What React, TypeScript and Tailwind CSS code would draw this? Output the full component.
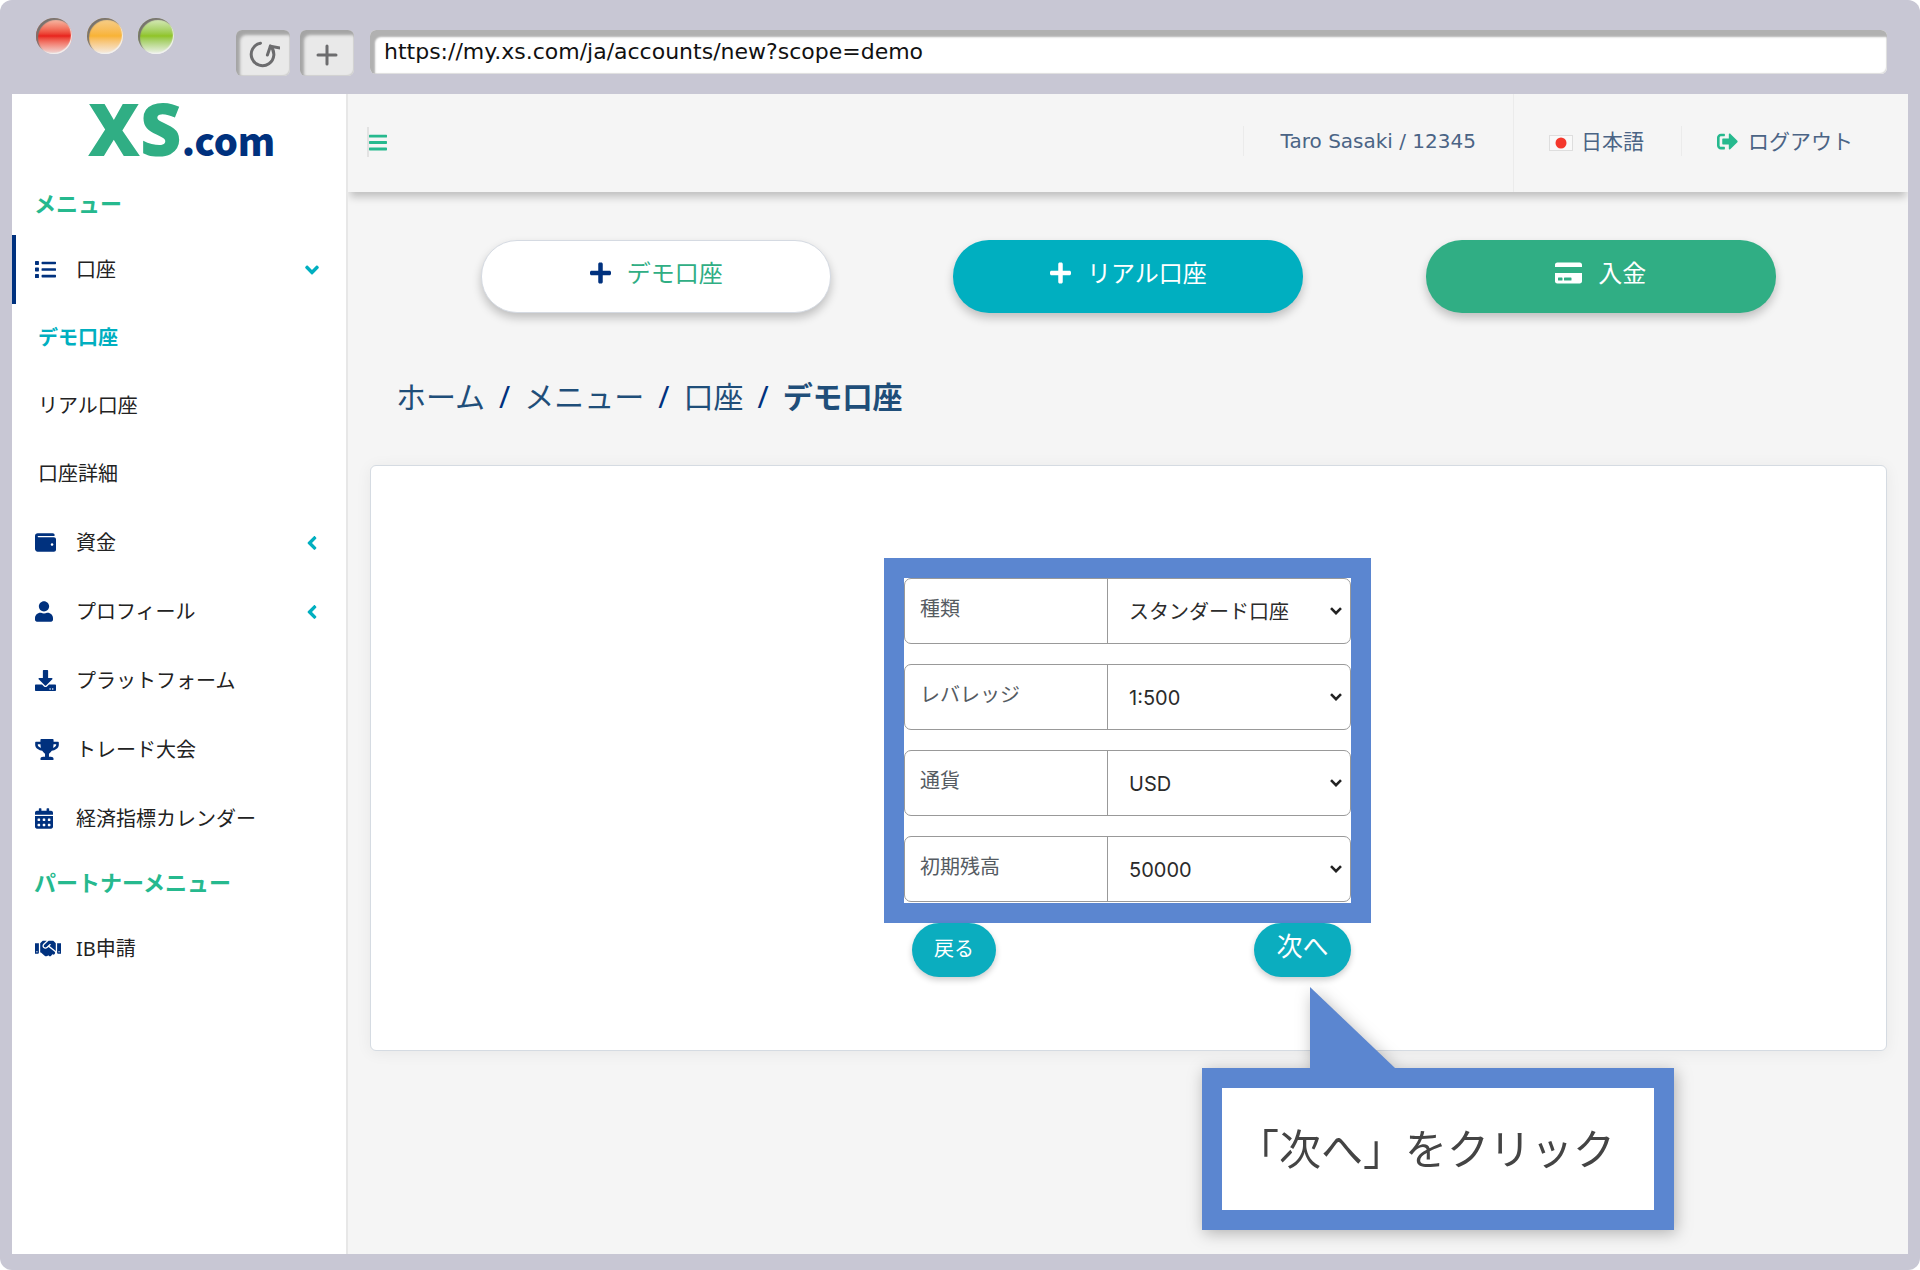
import type { ReactNode } from "react";
import type { IconType } from "react-icons";
import {
    FaAngleDown,
    FaAngleLeft,
    FaBars,
    FaCalendarAlt,
    FaCreditCard,
    FaDownload,
    FaHandshake,
    FaList,
    FaPlus,
    FaSignOutAlt,
    FaTrophy,
    FaUser,
    FaWallet,
} from "react-icons/fa";

const accountLinks = [
    { label: "デモ口座", active: true },
    { label: "リアル口座", active: false },
    { label: "口座詳細", active: false },
];

const fields = [
    { id: "type", label: "種類", value: "スタンダード口座" },
    { id: "leverage", label: "レバレッジ", value: "1:500" },
    { id: "currency", label: "通貨", value: "USD" },
    { id: "balance", label: "初期残高", value: "50000" },
];

function BrowserBar() {
    const light =
        "h-9 w-9 rounded-full shadow-[inset_2px_2px_1px_#77736f,inset_-1px_-1px_1px_#f2f2f2]";
    const tool =
        "flex h-[46px] w-[54px] items-center justify-center rounded-md bg-[#e9e9e9] text-[#6c6c6e] shadow-[inset_4px_5px_3px_#a5a5a5,inset_-1px_-1px_1px_#d0d0d0]";
    return (
        <div className="flex h-[94px] shrink-0 items-start pr-[33px] pl-9">
            <div className="flex gap-[15px] pt-[18px]">
                <span className={`${light} bg-linear-to-b from-[#f4c3b0] via-[#e8201c] to-[#ecdcdc]`} />
                <span className={`${light} bg-linear-to-b from-[#f6cf8c] via-[#f8b334] to-[#f4ece4]`} />
                <span className={`${light} bg-linear-to-b from-[#dcecc0] via-[#90c424] to-[#f0f2ec]`} />
            </div>
            <div className="flex gap-2.5 pt-[30px] pl-[62px]">
                <button className={tool} aria-label="再読み込み">
                    <svg viewBox="0 0 34 30" className="h-[30px] w-[34px]" fill="none" stroke="currentColor" strokeWidth="3" strokeLinecap="round">
                        <path d="M14.5 5.2A11.3 11.3 0 1 0 24.4 8.2" />
                        <path d="M34.5 10L24.4 8.2L21.4 17" />
                    </svg>
                </button>
                <button className={tool} aria-label="新しいタブ">
                    <svg viewBox="0 0 22 22" className="mt-1 h-[22px] w-[22px]" stroke="currentColor" strokeWidth="3" strokeLinecap="round">
                        <path d="M11 2v18M2 11h18" />
                    </svg>
                </button>
            </div>
            <div className="flex-1 pt-[30px] pl-4">
                <input
                    aria-label="アドレス"
                    defaultValue="https://my.xs.com/ja/accounts/new?scope=demo"
                    className="block h-11 w-full rounded-md bg-white px-3.5 pb-0.5 font-['DejaVu_Sans',sans-serif] text-[22px] text-[#111] shadow-[inset_5px_7px_2px_#b1b1b1,inset_-1px_-1px_1px_#ddd] outline-none"
                />
            </div>
        </div>
    );
}

function MenuHeading({ children }: { children: ReactNode }) {
    return (
        <h2 className="flex h-[61px] items-center pb-1 pl-[22px] text-[22px] leading-none font-bold text-[#26b98e]">
            {children}
        </h2>
    );
}

type MenuItemProps = {
    icon: IconType;
    iconWidth?: string;
    label: string;
    active?: boolean;
    arrow?: IconType;
};

function MenuItem({ icon: Icon, iconWidth = "w-[21px]", label, active, arrow: Arrow }: MenuItemProps) {
    return (
        <a
            href="#"
            className={`flex h-[69px] items-center border-l-4 pr-6 pl-[19px] text-xl leading-none text-[#222] ${
                active ? "border-[#00317e]" : "border-transparent"
            }`}
        >
            <span className="w-[41px] text-[#00317e]">
                <Icon className={`h-[21px] ${iconWidth}`} />
            </span>
            <span className="flex-1">{label}</span>
            {Arrow && <Arrow className="h-[22px] w-5 text-[#00afc0]" />}
        </a>
    );
}

function Sidebar() {
    return (
        <aside className="w-[336px] shrink-0 border-r-2 border-[#e7e7e7] bg-white">
            <a href="#" className="flex h-20 items-baseline pl-[76px] font-black">
                <span className="font-['Open_Sans',sans-serif] text-7xl leading-[68px] text-[#30ae84]">XS</span>
                <span className="font-['Noto_Sans_CJK_JP',sans-serif] text-[38px] leading-none text-[#00317e]">.com</span>
            </a>
            <MenuHeading>メニュー</MenuHeading>
            <nav>
                <MenuItem icon={FaList} label="口座" active arrow={FaAngleDown} />
                {accountLinks.map((link) => (
                    <a
                        key={link.label}
                        href="#"
                        className={`flex h-[68px] items-center pl-[26px] text-xl leading-none ${
                            link.active ? "font-bold text-[#00afc0]" : "text-[#222]"
                        }`}
                    >
                        {link.label}
                    </a>
                ))}
                <MenuItem icon={FaWallet} label="資金" arrow={FaAngleLeft} />
                <MenuItem icon={FaUser} iconWidth="w-[18px]" label="プロフィール" arrow={FaAngleLeft} />
                <MenuItem icon={FaDownload} label="プラットフォーム" />
                <MenuItem icon={FaTrophy} iconWidth="w-6" label="トレード大会" />
                <MenuItem icon={FaCalendarAlt} iconWidth="w-[18px]" label="経済指標カレンダー" />
            </nav>
            <MenuHeading>パートナーメニュー</MenuHeading>
            <nav>
                <MenuItem icon={FaHandshake} iconWidth="w-[26px]" label="IB申請" />
            </nav>
        </aside>
    );
}

function Header() {
    return (
        <header className="relative flex h-[98px] items-center bg-[#f5f5f5] pl-[19px] text-[21px] leading-none text-[#4b6485] shadow-[0_7px_8px_-2px_rgba(0,0,0,0.22)]">
            <button aria-label="メニューを開く" className="mb-0.5 flex h-[30px] items-center border-l-2 border-[#e2e2e2] text-[#26b98e]">
                <FaBars className="h-[21px] w-[18px]" />
            </button>
            <div className="ml-auto flex h-full items-center">
                <span className="mb-1 flex h-[30px] items-center border-l border-[#ebebeb] px-[37px] font-['DejaVu_Sans',sans-serif] text-xl leading-none">
                    Taro Sasaki / 12345
                </span>
                <a href="#" className="flex h-full items-center gap-2 border-l border-[#ebebeb] pr-[37px] pb-1 pl-[35px]">
                    <svg viewBox="0 0 24 16" className="mt-1 h-4 w-6">
                        <rect width="24" height="16" fill="#dedede" />
                        <rect x="1" y="1" width="22" height="14" fill="#f9f9f9" />
                        <circle cx="12" cy="8" r="5.5" fill="#f4382c" />
                    </svg>
                    日本語
                </a>
                <a href="#" className="mb-1 flex h-[30px] items-center gap-2.5 border-l border-[#ebebeb] pr-[55px] pl-[35px]">
                    <FaSignOutAlt className="h-[21px] w-[21px] text-[#26b98e]" />
                    ログアウト
                </a>
            </div>
        </header>
    );
}

type ActionProps = {
    icon: IconType;
    label: string;
    className: string;
    iconClassName: string;
};

function ActionButton({ icon: Icon, label, className, iconClassName }: ActionProps) {
    return (
        <button
            className={`flex h-[73px] w-[350px] items-center justify-center gap-4 rounded-[36px] pb-2 text-2xl leading-none shadow-[0_5px_10px_rgba(0,0,0,0.22)] ${className}`}
        >
            <Icon className={`h-6 ${iconClassName}`} />
            {label}
        </button>
    );
}

function Breadcrumb() {
    return (
        <nav className="mt-16 flex h-10 items-center gap-[14px] pl-[26px] text-[30px] leading-none text-[#1f4e79]">
            <a href="#">ホーム</a>
            <span className="text-[#00317e]">/</span>
            <a href="#">メニュー</a>
            <span className="text-[#00317e]">/</span>
            <a href="#">口座</a>
            <span className="text-[#00317e]">/</span>
            <span className="font-bold">デモ口座</span>
        </nav>
    );
}

function Callout() {
    return (
        <div className="absolute top-full -left-[52px] z-10 mt-2.5 w-[472px] drop-shadow-[2px_3px_8px_rgba(0,0,0,0.28)]">
            <svg viewBox="0 0 85 81" className="ml-[108px] block h-[81px] w-[85px]">
                <path d="M0 0L85 81H0Z" fill="#5b86d0" />
            </svg>
            <div className="flex h-[162px] items-center justify-center border-20 border-[#5b86d0] bg-white pr-6 text-[42px] leading-none whitespace-nowrap text-[#444]">
                「次へ」をクリック
            </div>
        </div>
    );
}

function AccountForm() {
    return (
        <form className="mx-auto w-[487px]">
            <div className="flex flex-col gap-5 border-20 border-[#5b86d0] bg-white pb-px">
                {fields.map((field) => (
                    <div key={field.id} className="flex h-[66px] rounded-[7px] border border-[#999] text-xl leading-none">
                        <label htmlFor={field.id} className="flex w-[203px] items-center border-r border-[#999] pb-1 pl-[15px] text-[#555b62]">
                            {field.label}
                        </label>
                        <div className="relative flex-1">
                            <select
                                id={field.id}
                                className="h-full w-full appearance-none rounded-r-[7px] bg-transparent pt-0.5 pl-[21px] font-['Inter','Noto_Sans_CJK_JP',sans-serif] text-[#2b2b2b] outline-none"
                            >
                                <option>{field.value}</option>
                            </select>
                            <svg viewBox="0 0 12 8" className="pointer-events-none absolute top-7 right-2 h-2 w-3" fill="none" stroke="#222" strokeWidth="2.6">
                                <path d="M1 1.2L6 6.2L11 1.2" />
                            </svg>
                        </div>
                    </div>
                ))}
            </div>
            <div className="flex justify-between pr-5 pl-7 leading-none text-white">
                <button type="button" className="h-[54px] w-[84px] rounded-full bg-[#0badbf] pb-0.5 text-xl shadow-[0_3px_6px_rgba(0,0,0,0.2)]">
                    戻る
                </button>
                <div className="relative">
                    <button type="button" className="h-[54px] w-[97px] rounded-full bg-[#0badbf] pb-2 text-[26px] shadow-[0_3px_6px_rgba(0,0,0,0.2)]">
                        次へ
                    </button>
                    <Callout />
                </div>
            </div>
        </form>
    );
}

export default function App() {
    return (
        <div className="min-h-screen bg-white font-['Noto_Sans','Noto_Sans_CJK_JP',sans-serif]">
            <div className="flex min-h-screen flex-col rounded-xl bg-[#c8c7d4] pb-4">
                <BrowserBar />
                <div className="mx-3 flex flex-1 bg-[#f5f5f5]">
                    <Sidebar />
                    <div className="min-w-0 flex-1 overflow-x-clip">
                        <Header />
                        <main className="pt-12 pr-[21px] pl-[22px]">
                            <div className="grid grid-cols-3 justify-items-center px-[50px]">
                                <ActionButton
                                    icon={FaPlus}
                                    label="デモ口座"
                                    className="border border-[#d5dae2] bg-white text-[#30ae84]"
                                    iconClassName="w-[21px] text-[#00317e]"
                                />
                                <ActionButton icon={FaPlus} label="リアル口座" className="bg-[#00afc0] text-white" iconClassName="w-[21px]" />
                                <ActionButton icon={FaCreditCard} label="入金" className="bg-[#30ae84] text-white" iconClassName="w-[27px]" />
                            </div>
                            <Breadcrumb />
                            <section className="mt-12 h-[586px] rounded-md border border-[#d5dbe2] bg-white pt-[92px] pr-0.5 shadow-[0_2px_16px_rgba(0,0,0,0.06)]">
                                <AccountForm />
                            </section>
                        </main>
                    </div>
                </div>
            </div>
        </div>
    );
}
